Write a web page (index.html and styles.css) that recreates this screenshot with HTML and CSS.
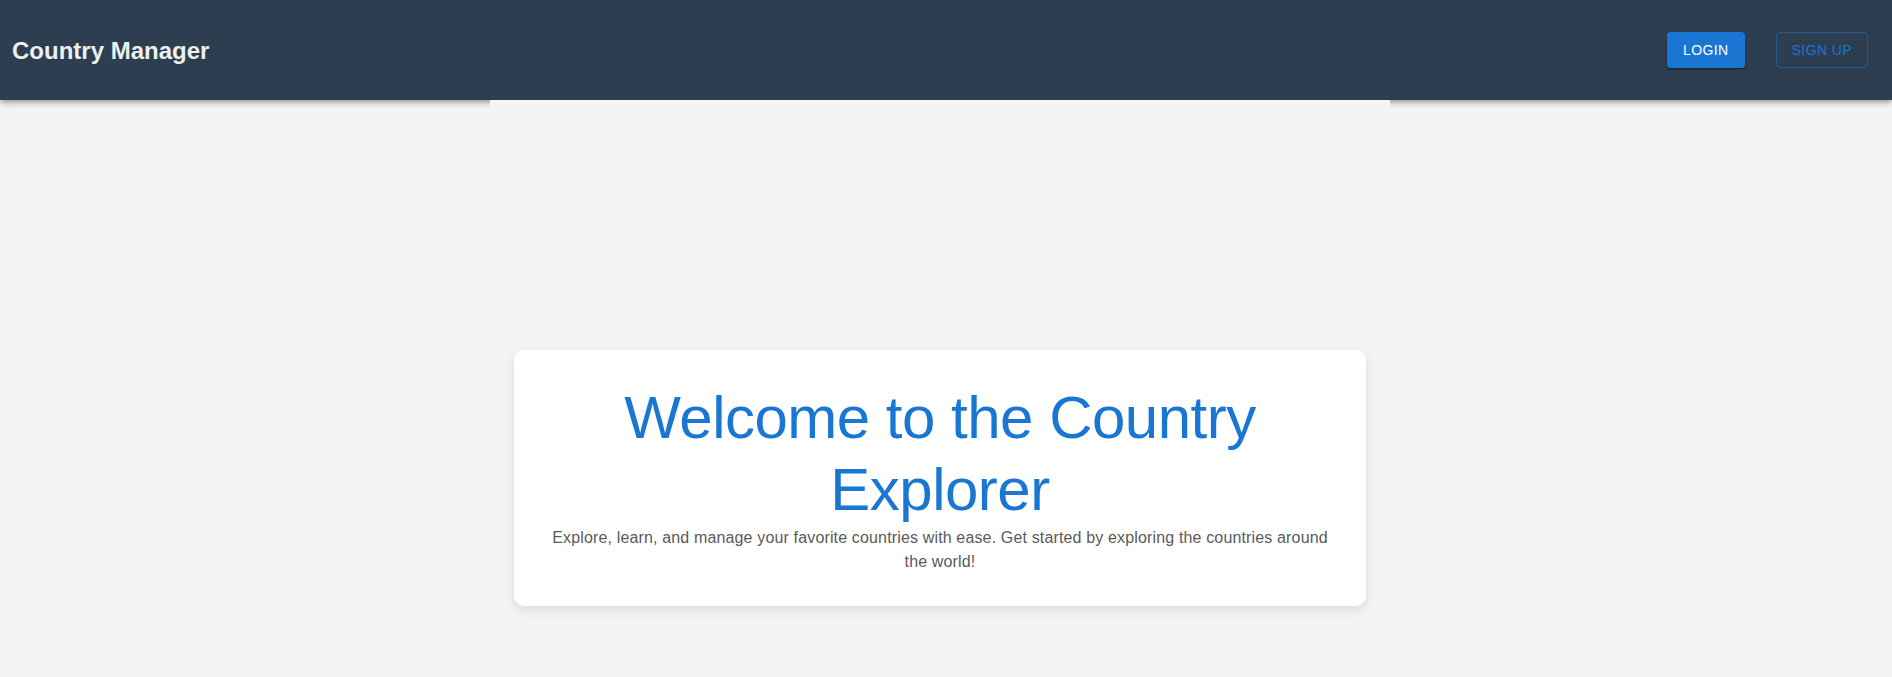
FILE: index.html
```html
<!DOCTYPE html>
<html lang="en">
<head>
<meta charset="utf-8">
<title>Country Manager</title>
<link rel="stylesheet" href="styles.css">
</head>
<body>
<header class="appbar">
  <div class="brand">Country Manager</div>
  <nav class="actions">
    <button class="btn btn-contained">Login</button>
    <button class="btn btn-outlined">Sign Up</button>
  </nav>
</header>
<div class="page">
  <main class="container">
    <section class="card">
      <h1 class="title">Welcome to the Country Explorer</h1>
      <p class="lead">Explore, learn, and manage your favorite countries with ease. Get started by exploring the countries around the world!</p>
    </section>
  </main>
</div>
</body>
</html>
```

FILE: styles.css
```css
* { box-sizing: border-box; }
html, body {
  margin: 0;
  padding: 0;
  background: #f4f4f4;
  font-family: "Liberation Sans", Arial, Helvetica, sans-serif;
  height: 100%;
  overflow: hidden;
}
.appbar {
  height: 100px;
  background: #2c3e50;
  display: flex;
  align-items: center;
  justify-content: space-between;
  padding: 0 24px 0 12px;
  box-shadow: 0 2px 4px -1px rgba(0,0,0,0.2), 0 4px 5px 0 rgba(0,0,0,0.14), 0 1px 10px 0 rgba(0,0,0,0.12);
  position: relative;
  z-index: 1;
}
.brand {
  color: #ecf0f1;
  font-size: 24px;
  font-weight: 700;
  line-height: 1;
  padding-top: 1px;
}
.actions {
  display: flex;
  align-items: center;
  gap: 31px;
}
.btn {
  font-family: inherit;
  font-size: 14px;
  font-weight: 500;
  letter-spacing: 0.4px;
  text-transform: uppercase;
  line-height: 24px;
  border-radius: 4px;
  min-width: 64px;
  cursor: pointer;
}
.btn-contained {
  background: #1976d2;
  color: #fff;
  border: none;
  padding: 6px 16px;
  box-shadow: 0 3px 1px -2px rgba(0,0,0,0.2), 0 2px 2px 0 rgba(0,0,0,0.14), 0 1px 5px 0 rgba(0,0,0,0.12);
}
.btn-outlined {
  background: transparent;
  color: #1976d2;
  border: 1px solid rgba(25,118,210,0.5);
  padding: 5px 15px;
}
.page {
  padding-right: 12px;
}
.container {
  position: relative;
  z-index: 2;
  width: 900px;
  margin: 0 auto;
  background: #f4f4f4;
  padding: 250px 24px 72px;
  min-height: 577px;
}
.card {
  background: #fff;
  border-radius: 10px;
  padding: 32px;
  text-align: center;
  box-shadow: 0 4px 12px rgba(0,0,0,0.1);
}
.title {
  margin: 0;
  font-size: 60px;
  font-weight: 400;
  line-height: 72px;
  letter-spacing: -0.5px;
  color: #1976d2;
}
.lead {
  margin: 0;
  font-size: 16px;
  line-height: 24px;
  letter-spacing: 0.15px;
  color: #5a5a5a;
}
```
